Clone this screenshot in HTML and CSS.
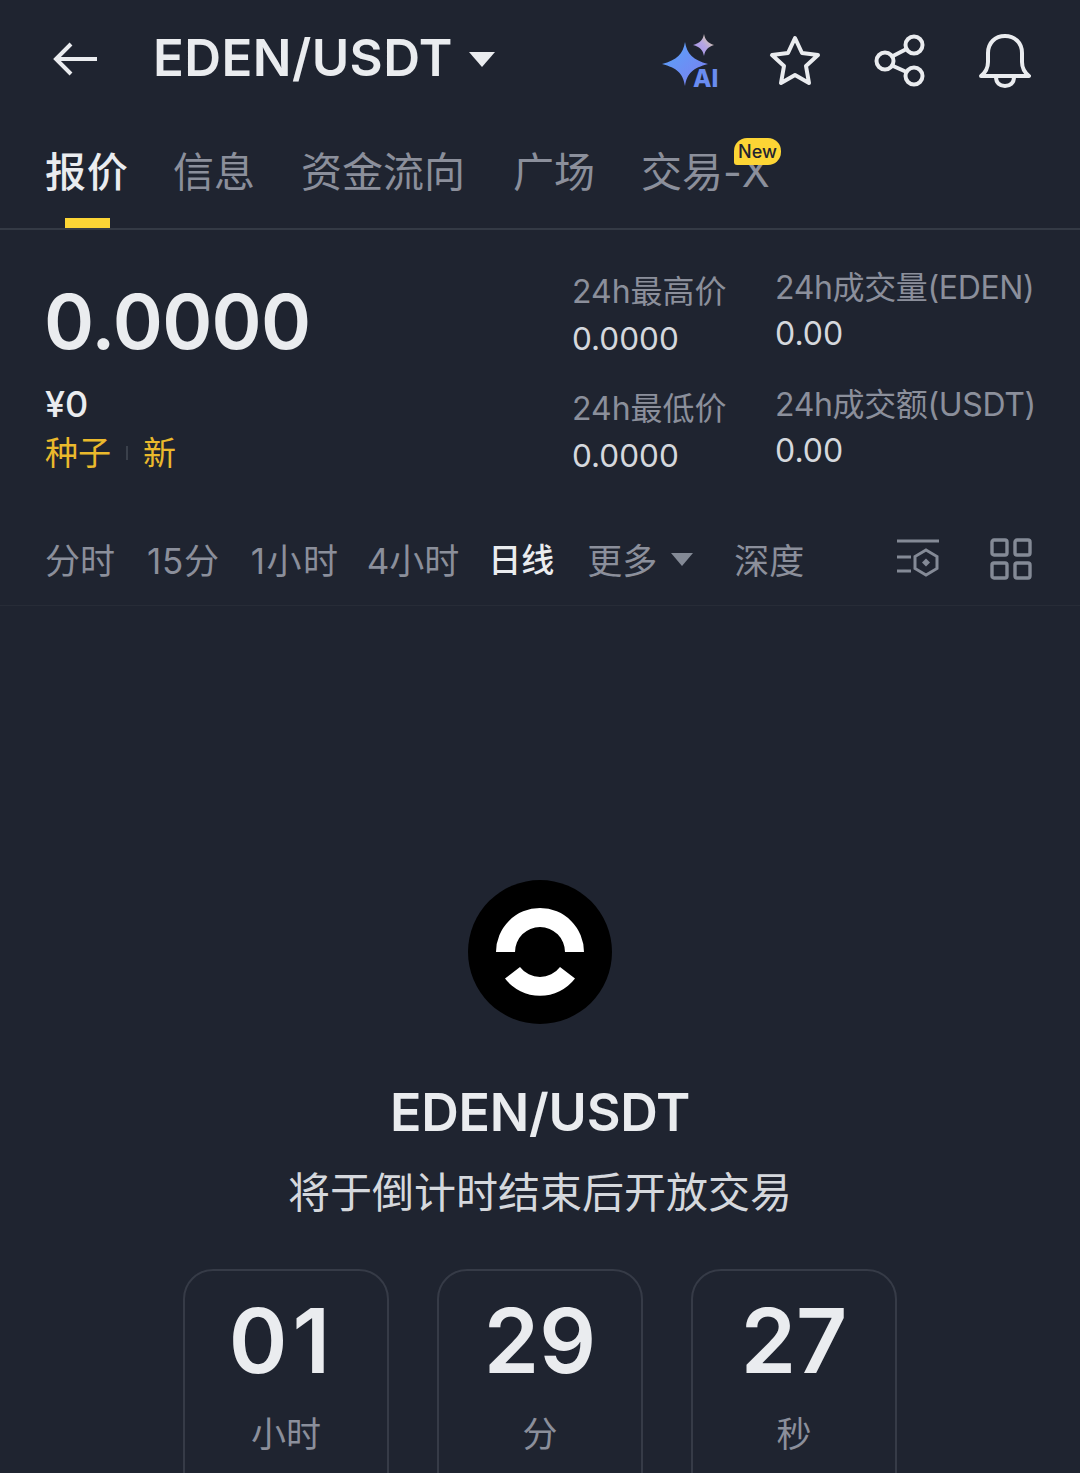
FILE: index.html
```html
<!DOCTYPE html>
<html lang="zh-CN">
<head>
    <meta charset="UTF-8">
    <meta name="viewport" content="width=device-width, initial-scale=1.0">
    <title>EDEN/USDT</title>
    <link rel="stylesheet" href="styles.css">
</head>
<body>
    <header class="topbar">
        <svg class="back" width="46" height="36" viewBox="0 0 46 36" fill="none" stroke="#eaecef" stroke-width="4"><path d="M3 18H45M19 3L4 18l15 15"/></svg>
        <div class="pair">EDEN/USDT</div>
        <span class="caret caret-big"></span>
        <div class="actions">
            <svg class="ai-icon" width="64" height="58" viewBox="0 0 64 58">
                <defs>
                    <linearGradient id="ai" x1="0" y1="0" x2="1" y2="1"><stop offset="0" stop-color="#55a5fa"/><stop offset="1" stop-color="#7f7cf0"/></linearGradient>
                    <linearGradient id="ai2" x1="1" y1="0" x2="0" y2="1"><stop offset="0" stop-color="#e8d98c"/><stop offset="0.5" stop-color="#b4a4e4"/><stop offset="1" stop-color="#a08ee8"/></linearGradient>
                </defs>
                <path d="M25 10C27 22 33 28 48 32 33 36 27 41 25 54 23 41 17 36 2 32 17 28 23 22 25 10Z" fill="url(#ai)"/>
                <path d="M44 2C45 8 48 11 54 13 48 15 45 18 44 24 43 18 40 15 33 13 40 11 43 8 44 2Z" fill="url(#ai2)"/>
                <text x="33" y="55" class="ai-text">AI</text>
            </svg>
            <svg width="54" height="54" viewBox="0 0 54 54" fill="none" stroke="#eaecef" stroke-width="4" stroke-linejoin="round"><path d="M28 4l7 15 16 2-12 11 3 17-14-8-14 8 3-17L5 21l16-2z"/></svg>
            <svg width="54" height="54" viewBox="0 0 54 54" fill="none" stroke="#eaecef" stroke-width="4"><circle cx="13" cy="27" r="8.500"/><circle cx="42" cy="11" r="8.500"/><circle cx="42" cy="42" r="8.500"/><path d="M20 22.500L34.500 15M20 31.500L34.500 38"/></svg>
            <svg width="54" height="54" viewBox="0 0 54 54" fill="none" stroke="#eaecef" stroke-width="4" stroke-linejoin="round"><path d="M4 42c5-4 7-8 7-14v-9C11 9 18 2 28 2s17 7 17 17v9c0 6 2 10 7 14z"/><path d="M19 43c0 6 4 9 9 9s9-3 9-9"/></svg>
        </div>
    </header>

    <nav class="tabs">
        <a class="tab active">报价</a>
        <a class="tab">信息</a>
        <a class="tab">资金流向</a>
        <a class="tab tab-square">广场</a>
        <a class="tab tab-new">交易-X<span class="new-badge">New</span></a>
    </nav>

    <section class="market">
        <div class="price-col">
            <div class="price">0.0000</div>
            <div class="cny">¥0</div>
            <div class="tags"><span>种子</span><i class="tag-sep"></i><span>新</span></div>
        </div>
        <div class="stats">
            <div class="stat"><div class="stat-label">24h最高价</div><div class="stat-value">0.0000</div></div>
            <div class="stat stat-r"><div class="stat-label">24h成交量(EDEN)</div><div class="stat-value">0.00</div></div>
            <div class="stat"><div class="stat-label">24h最低价</div><div class="stat-value">0.0000</div></div>
            <div class="stat stat-r"><div class="stat-label">24h成交额(USDT)</div><div class="stat-value">0.00</div></div>
        </div>
    </section>

    <div class="intervals">
        <span>分时</span>
        <span class="wide-a">15分</span>
        <span class="wide-b">1小时</span>
        <span>4小时</span>
        <span class="on">日线</span>
        <span class="more">更多<span class="caret"></span></span>
        <span>深度</span>
        <div class="chart-tools">
            <svg width="44" height="42" viewBox="0 0 44 42" fill="none" stroke="#848a96" stroke-width="3"><path d="M1 3H43M1 19H15M1 33H15"/><path d="M30 12l11 6.500v12L30 37l-11-6.500v-12z"/><path d="M30 20.500l4 4-4 4-4-4z" fill="#848a96" stroke="none"/></svg>
            <svg width="42" height="42" viewBox="0 0 42 42" fill="none" stroke="#848a96" stroke-width="3.400"><rect x="2" y="2" width="15" height="15" rx="2"/><rect x="25" y="2" width="15" height="15" rx="2"/><rect x="2" y="25" width="15" height="15" rx="2"/><rect x="25" y="25" width="15" height="15" rx="2"/></svg>
        </div>
    </div>

    <main class="launch">
        <svg class="logo" width="144" height="144" viewBox="0 0 144 144">
            <circle cx="72" cy="72" r="72" fill="#000"/>
            <path d="M28 72A44 44 0 0 1 116 72H97A25 25 0 0 0 47 72Z" fill="#fff"/>
            <path d="M37 98.500A44 44 0 0 0 107 98.500L92 87A25 25 0 0 1 52 87Z" fill="#fff"/>
        </svg>
        <h2 class="launch-pair">EDEN/USDT</h2>
        <p class="launch-note">将于倒计时结束后开放交易</p>
        <div class="countdown">
            <div class="cell"><div class="num num-hours">01</div><div class="unit">小时</div></div>
            <div class="cell"><div class="num">29</div><div class="unit">分</div></div>
            <div class="cell"><div class="num">27</div><div class="unit">秒</div></div>
        </div>
    </main>
</body>
</html>
```

FILE: styles.css
```css
html, body {
    margin: 0;
    padding: 0;
}
body {
    width: 1080px;
    height: 1473px;
    overflow: hidden;
    background: #1f2430;
    color: #eaecef;
    font-family: Inter, "Noto Sans CJK SC", sans-serif;
}
.topbar {
    display: flex;
    align-items: center;
    height: 118px;
    padding: 0 49px 0 52px;
}
.back {
    flex: none;
}
.pair {
    margin-left: 55px;
    margin-bottom: 3px;
    font-size: 51px;
    font-weight: 600;
    letter-spacing: 0.4px;
}
.caret {
    display: inline-block;
    width: 0;
    height: 0;
    border-left: 11px solid transparent;
    border-right: 11px solid transparent;
    border-top: 13px solid #848a96;
}
.caret-big {
    margin-left: 16px;
    border-left-width: 13px;
    border-right-width: 13px;
    border-top: 15px solid #eaecef;
}
.actions {
    display: flex;
    align-items: center;
    gap: 51px;
    margin-top: 4px;
    margin-left: auto;
}
.ai-icon {
    margin-right: -8px;
    overflow: visible;
}
.ai-text {
    font-family: Inter, sans-serif;
    font-size: 24px;
    font-weight: 800;
    fill: #6a8cf0;
}
.tabs {
    display: flex;
    gap: 46px;
    box-sizing: border-box;
    height: 112px;
    padding: 0 45px;
    border-bottom: 2px solid #343a45;
}
.tab {
    position: relative;
    font-size: 41px;
    line-height: 108px;
    color: #8b8f9b;
}
.tab-square {
    margin-left: 2px;
}
.tab.active {
    margin-right: -1.600px;
    color: #eaecef;
    font-weight: 500;
    letter-spacing: 0.8px;
}
.tab.active::after {
    content: "";
    position: absolute;
    left: 20px;
    bottom: 0;
    width: 45px;
    height: 10px;
    background: #fcd535;
}
.new-badge {
    position: absolute;
    right: -11px;
    top: 20px;
    padding: 0 4px;
    border-radius: 13px 13px 13px 3px;
    background: #fcd535;
    color: #1f2430;
    font-size: 18px;
    font-weight: 500;
    line-height: 27px;
}
.market {
    display: flex;
    justify-content: space-between;
    height: 270px;
    padding: 0 46px;
}
.price-col {
    padding-top: 45px;
}
.price {
    margin-left: -2px;
    font-size: 76px;
    font-weight: 600;
    line-height: 92px;
    letter-spacing: -0.7px;
}
.cny {
    margin-top: 16px;
    margin-left: -1px;
    font-size: 36px;
    font-weight: 500;
    line-height: 42px;
}
.tags {
    display: flex;
    align-items: center;
    margin-top: 4px;
    margin-left: -1px;
    color: #eab92c;
    font-size: 33px;
    line-height: 48px;
}
.tag-sep {
    width: 2px;
    height: 14px;
    margin: 0 15px;
    background: #3a404b;
}
.stats {
    display: grid;
    grid-template-columns: 203px 260px;
    grid-auto-rows: 117px;
    margin-top: 42px;
    margin-right: -1px;
}
.stat-label {
    font-size: 32px;
    line-height: 40px;
    color: #8b8f9b;
    white-space: nowrap;
}
.stat-value {
    margin-top: 7px;
    font-size: 31.500px;
    line-height: 40px;
    color: #d5d8dd;
}
.stat-r {
    position: relative;
    top: -4px;
}
.stat-r .stat-label {
    letter-spacing: -0.35px;
}
.stat-r .stat-value {
    margin-top: 6px;
    font-size: 32px;
}
.intervals {
    display: flex;
    align-items: center;
    box-sizing: border-box;
    height: 106px;
    padding: 11px 48px 0 45px;
    border-bottom: 1px solid #272c37;
    font-size: 35px;
    color: #8b8f9b;
    gap: 31px;
}
.intervals .wide-a {
    letter-spacing: 0.7px;
    margin-left: 1px;
}
.intervals .wide-b {
    margin-right: -4px;
    letter-spacing: 1.600px;
}
.intervals .on {
    margin: 0 2px 0 -2px;
    color: #eaecef;
    font-size: 33px;
    font-weight: 500;
}
.more {
    display: flex;
    align-items: center;
    gap: 14px;
    margin-right: 10px;
}
.more .caret {
    margin-top: 3px;
}
.chart-tools {
    display: flex;
    align-items: center;
    gap: 50px;
    margin-top: 2px;
    margin-left: auto;
}
.launch {
    display: flex;
    flex-direction: column;
    align-items: center;
    padding-top: 274px;
}
.launch-pair {
    margin: 55px 0 0;
    font-size: 52px;
    font-weight: 600;
    line-height: 68px;
    letter-spacing: -0.2px;
}
.launch-note {
    margin: 17px 0 0;
    font-size: 42px;
    line-height: 58px;
    color: #d5d8dd;
}
.countdown {
    display: flex;
    gap: 48px;
    margin-top: 47px;
}
.cell {
    box-sizing: border-box;
    width: 206px;
    height: 240px;
    border: 2px solid #363b47;
    border-radius: 30px;
    text-align: center;
}
.num {
    margin-top: 22px;
    font-size: 89px;
    font-weight: 600;
    line-height: 96px;
}
.num-hours {
    margin-right: 8px;
    letter-spacing: 5px;
}
.unit {
    margin-top: 21px;
    font-size: 35px;
    line-height: 48px;
    color: #8b8f9b;
}
```
